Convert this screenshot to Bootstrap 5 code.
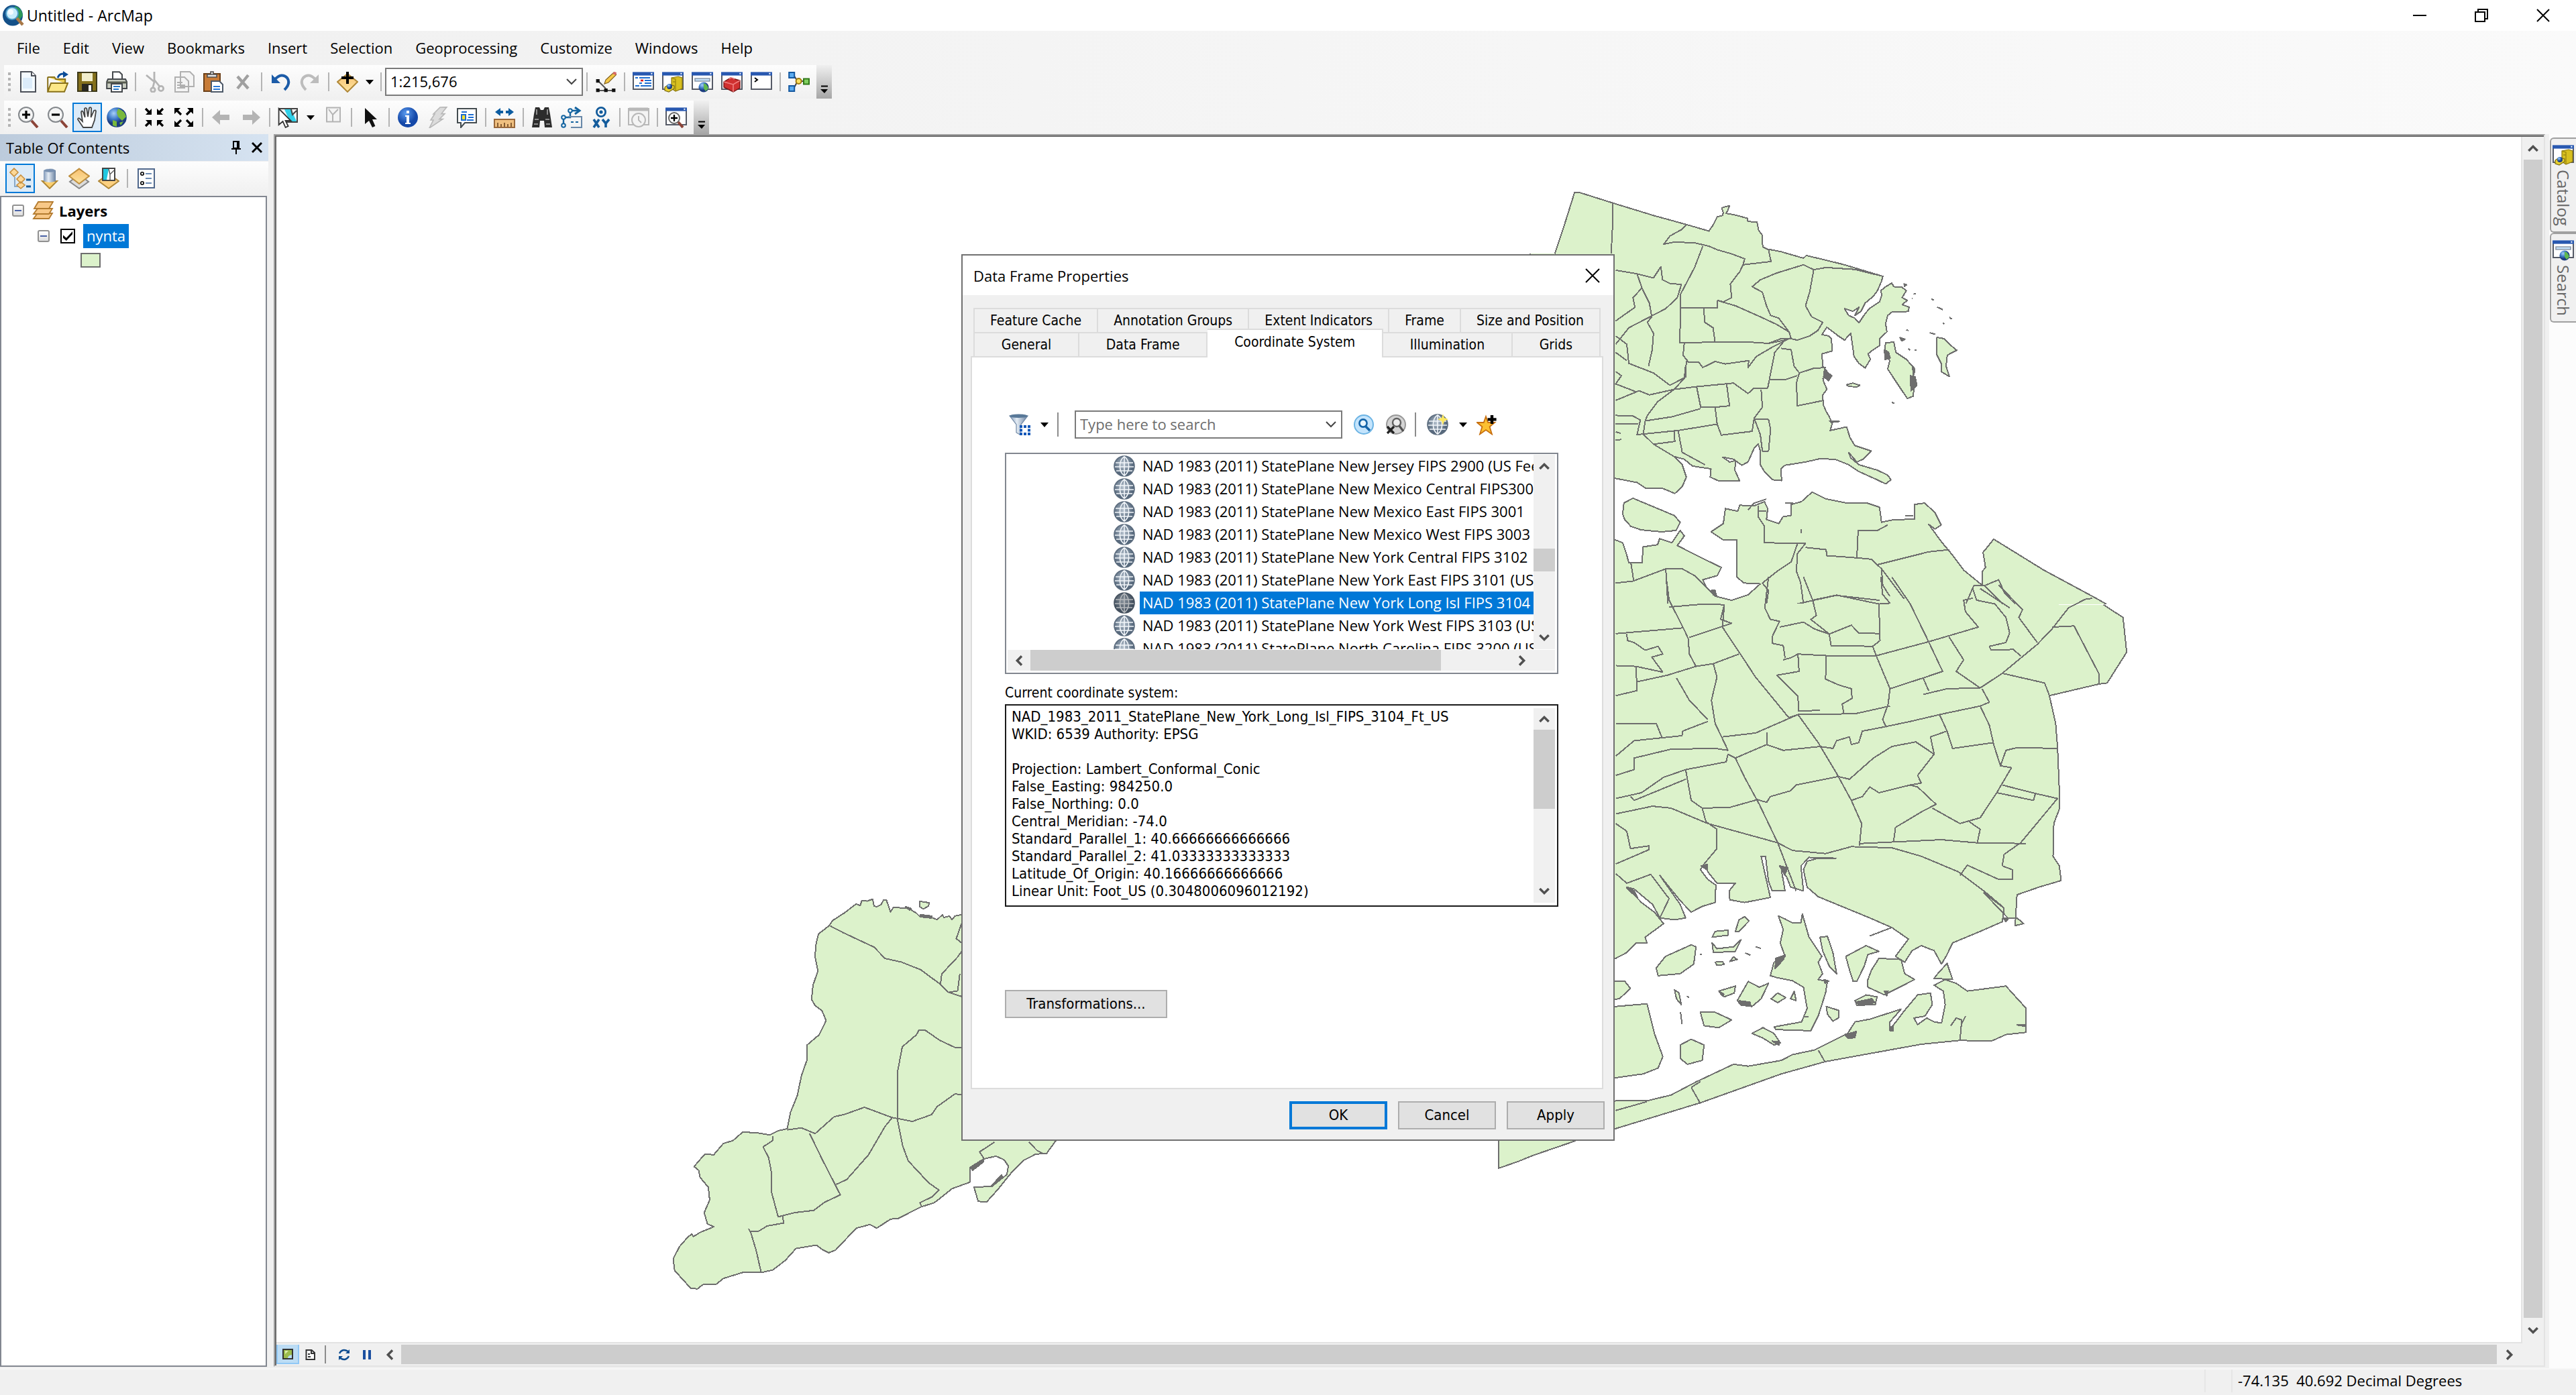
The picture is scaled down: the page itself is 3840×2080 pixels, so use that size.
<!DOCTYPE html>
<html lang="en">
<head>
<meta charset="utf-8">
<meta name="viewport" content="width=device-width, initial-scale=1">
<title>Untitled - ArcMap</title>
<link href="https://cdn.jsdelivr.net/npm/bootstrap@5.3.0/dist/css/bootstrap.min.css" rel="stylesheet">
<script src="https://cdn.jsdelivr.net/npm/bootstrap@5.3.0/dist/js/bootstrap.bundle.min.js"></script>
<style>
  :root { --face:#f0f0f0; --accent:#0078d7; --thumb:#cdcdcd; --ui:"Open Sans","Noto Sans",sans-serif; --dlg:"DejaVu Sans Condensed","DejaVu Sans",sans-serif; }
  body { font-family:var(--ui); font-size:22px; line-height:28px; color:#000; background:var(--face); overflow:hidden; }
  button { color:inherit; font:inherit; padding:0; border:0; background:none; }
  svg { display:block; flex:none; }
  .ico { width:32px; height:32px; }
  .titlebar { height:46px; background:#fff; font-size:23px; padding-right:3px; }
  .winbtn { width:92px; height:46px; display:flex; align-items:center; justify-content:center; }
  .chrome-area { background:linear-gradient(to right,#f0f0f0,#fafafa); }
  .menus { height:51px; padding-left:8px; }
  .menus .nav-link { color:#000; padding:0 17px 2px; }
  .strip { height:50px; background:linear-gradient(#fdfdfd,#f0f0f0); width:max-content; margin-left:6px; }
  .grip { width:14px; height:28px; background:repeating-linear-gradient(#b4b4b4 0 4px,transparent 4px 8px) 6px 0/4px 28px no-repeat; }
  .tool { width:44px; height:44px; display:flex; align-items:center; justify-content:center; flex:none; }
  .tool.picked { background:#dcebf8; border:2px solid var(--accent); }
  .drop { width:22px; height:44px; display:flex; align-items:center; justify-content:center; flex:none; }
  .drop::after { content:""; border:6px solid transparent; border-top:7px solid #000; border-bottom:0; }
  .split { width:12px; height:28px; flex:none; background:linear-gradient(#b4b4b4,#b4b4b4) 5px 0/2px 100% no-repeat; }
  .more { width:23px; height:50px; margin-left:4px; background:linear-gradient(#f0f0f0,#a6a6a6); display:flex; align-items:flex-end; justify-content:center; padding-bottom:4px; }
  .combo { position:relative; height:42px; }
  .combo input { width:100%; height:100%; border:2px solid #7a7a7a; border-radius:0; padding:0 40px 2px 6px; font:inherit; background:#fff; color:#000; }
  .combo input::placeholder { color:#6d6d6d; opacity:1; }
  .combo button { position:absolute; right:8px; top:12px; }
  .side { width:400px; }
  .side-head { height:40px; background:linear-gradient(to right,#bccbdc,#d6e3f1); padding:0 9px; }
  .side-tools { height:50px; background:linear-gradient(#fdfdfd,#f0f0f0); padding-left:8px; margin:1px 0; }
  .tree { border:2px solid #828790; background:#fff; margin:0 2px 2px 0; }
  .tree-row { height:36px; }
  .twist { width:18px; height:18px; border:2px solid #919191; border-radius:3px; background:linear-gradient(#fff,#dcdcdc); position:relative; }
  .twist::after { content:""; position:absolute; left:2px; right:2px; top:6px; height:2px; background:#4b63a7; }
  .tick { appearance:none; width:22px; height:22px; border:2px solid #000; margin:0; background:#fff; display:grid; place-items:center; }
  .tick:checked::after { content:""; width:14px; height:14px; background:#000; clip-path:polygon(0 40%,35% 70%,100% 0,100% 30%,35% 100%,0 70%); }
  .picked-text { background:var(--accent); color:#fff; height:36px; line-height:34px; padding:0 5px; }
  .swatch { width:30px; height:22px; border:2px solid #6e6e6e; background:#dcf2cb; }
  .frame { border:2px solid #a0a0a0; border-right-color:#e3e3e3; border-bottom-color:#e3e3e3; box-shadow:inset 2px 2px #696969; padding:2px; margin:0 6px 2px 8px; }
  .map { background:#fff; border-right:2px solid #e3e3e3; border-bottom:2px solid #e3e3e3; min-width:0; min-height:0; overflow:hidden; }
  .map svg { width:100%; height:100%; shape-rendering:crispEdges; }
  .map path { stroke:#6e6e6e; stroke-width:2px; vector-effect:non-scaling-stroke; stroke-linejoin:round; }
  .land { fill:#dcf2cb; } .seam { fill:none; } .speck { fill:#6e6e6e; }
  .bar-v { width:28px; background:var(--face); }
  .bar-h { background:var(--face); }
  .bar-v button, .bar-h button { display:flex; align-items:center; justify-content:center; flex:none; }
  .knob { background:var(--thumb); }
  .view-btn { width:34px; height:29px; display:flex; align-items:center; justify-content:center; }
  .view-btn.picked { background:#bcdcf4; border:2px solid #90c8f6; border-top:0; }
  .dock { width:40px; background:#fcfcfc; padding-top:5px; }
  .dock button { border:2px solid #a0a0a0; border-right:0; border-radius:6px 0 0 6px; background:var(--face); color:#666; font-size:24px; padding:8px 4px 8px 2px; display:flex; flex-direction:column; align-items:center; gap:6px; width:39px; margin-left:1px; }
  .dock span { writing-mode:vertical-rl; line-height:30px; }
  .status { height:40px; border-top:2px solid #f7f7f7; }
  .status div { border-left:2px solid #e6e6e6; height:34px; padding:2px 8px 0 8px; }
  .dlg { position:absolute; left:1433px; top:379px; width:974px; border:2px solid #707070; background:var(--face); font-family:var(--dlg); font-size:21px; }
  .dlg-title { height:59px; background:#fff; padding:0 16px; font-family:var(--ui); font-size:22px; }
  .tabs { margin:0 19px 0 16px; }
  .tabs .nav-link { height:36px; border:2px solid #dcdcdc; border-bottom:0; border-left-width:0; border-radius:0; padding:2px 4px; color:#000; background:var(--face); line-height:28px; white-space:nowrap; }
  .tabs .nav-item:first-child .nav-link { border-left-width:2px; }
  .tabs .nav-link.active { background:#fff; margin-top:-5px; height:43px; margin-bottom:-2px; padding-bottom:7px; position:relative; z-index:1; }
  .sheet { background:#fff; border:2px solid #dcdcdc; margin:0 15px 0 12px; padding:79px 65px 104px 49px; }
  .lookup { font-family:var(--ui); height:42px; font-size:22px; }
  .wide { width:48px; }
  .rule { width:10px; height:36px; background:linear-gradient(#8c8c8c,#8c8c8c) 4px 0/2px 100% no-repeat; }
  .picker { margin-top:21px; border:2px solid #828790; height:330px; font-family:var(--ui); font-size:22px; padding:1px 3px 3px 2px; }
  .picker ul { padding-left:158px; overflow:hidden; min-width:0; height:290px; }
  .picker li { height:34px; display:flex; align-items:center; white-space:nowrap; flex:none; gap:7px; }
  .picker li span { flex:1 0 auto; height:34px; line-height:32px; padding-left:4px; }
  .picker li.on span { background:var(--accent); color:#fff; }
  .bar-wide { width:32px; }
  .coords { border:2px solid #1a1a1a; height:302px; margin-top:3px; padding:4px 3px 4px 0; }
  .coords textarea { border:0; resize:none; overflow:hidden; padding:0 8px; font:inherit; font-size:22px; line-height:26px; outline:0; color:#000; min-width:0; }
  .push { height:42px; border:2px solid #adadad; background:#e1e1e1; width:146px; font-size:22px; }
  .push.main { border:4px solid var(--accent); }
</style>
</head>
<body class="d-flex flex-column vh-100 position-relative">

<svg width="0" height="0" class="position-absolute" aria-hidden="true">
  <defs>
    <radialGradient id="gBlue" cx=".35" cy=".3"><stop offset="0" stop-color="#a8d0f8"/><stop offset=".6" stop-color="#3c78c8"/><stop offset="1" stop-color="#1c3c80"/></radialGradient>
    <radialGradient id="gInfo" cx=".4" cy=".3"><stop offset="0" stop-color="#5c9cf0"/><stop offset="1" stop-color="#1448a8"/></radialGradient>
    <radialGradient id="gSteel" cx=".45" cy=".4"><stop offset="0" stop-color="#b8c4d0"/><stop offset="1" stop-color="#56687c"/></radialGradient>
    <linearGradient id="gGold" x2="0" y2="1"><stop offset="0" stop-color="#f8c070"/><stop offset="1" stop-color="#fce4a0"/></linearGradient>
    <linearGradient id="gCan"><stop offset="0" stop-color="#8098b8"/><stop offset=".4" stop-color="#e4ecf4"/><stop offset="1" stop-color="#6880a0"/></linearGradient>
  </defs>
  <symbol id="win" viewBox="0 0 16 16"><path d="M.5 1.500h15v12H.5z" fill="#fff" stroke="#555a66"/><path d="M0 .7h16v2.600H0z" fill="#2858b0"/><path d="M13.700 1.400h1v1h-1z" fill="#fff"/></symbol>
  <symbol id="catalog" viewBox="0 0 16 16"><use href="#win"/><path d="M7 5l5-1 3 1v8l-5 2-3-2z" fill="#d8c020" stroke="#8c7810" stroke-width=".6"/><path d="M7 5l3 1v9M8 8h2" fill="none" stroke="#a08c10" stroke-width=".7"/><path d="M2 12l3-2 4 1v2l-4 2.500-3-1z" fill="#e8d030" stroke="#7c6c10" stroke-width=".6"/><circle cx="5.500" cy="11.500" r="2" fill="url(#gBlue)"/></symbol>
  <symbol id="searchwin" viewBox="0 0 16 16"><use href="#win"/><path d="M2.500 5.500h11v2h-11z" fill="#c4e0f8" stroke="#8c98a8" stroke-width=".8"/><circle cx="9" cy="12" r="3.800" fill="url(#gBlue)"/><path d="M9 9q3 1 3.500 4l-2 2-1.500-2z" fill="#60b850"/></symbol>
  <symbol id="gridglobe" viewBox="0 0 16 16"><circle cx="8" cy="8" r="7.500" fill="url(#gSteel)" stroke="#5c6c7e" stroke-width=".8"/><path d="M1.500 5.500h13M1 8.500h14M2 11.500h12M8 .8v14.400M8 .8C3.600 4 3.600 12 8 15.200M8 .8c4.400 3.200 4.400 11.200 0 14.400" fill="none" stroke="#f2f6fa" stroke-width=".8"/></symbol>
  <symbol id="plusArrow" viewBox="0 0 12 8"><path d="M1 7l5-5 5 5" fill="none" stroke="#505050" stroke-width="2.600"/></symbol>
</svg>

<header>
  <div class="titlebar d-flex align-items-center">
    <svg class="ico ms-1 me-1" viewBox="0 0 16 16"><ellipse cx="7.500" cy="8" rx="7.500" ry="7.800" fill="#145088"/><path d="M9 1q5 1 6 7l-3 4-4-4z" fill="#2c9858"/><circle cx="7" cy="6.500" r="4.500" fill="#c8ecfc" stroke="#4c9cc8"/><circle cx="6" cy="5.500" r="2" fill="#fff" opacity=".8"/><path d="M10.500 10l4.500 5" stroke="#a87848" stroke-width="2.200"/></svg>
    <span>Untitled - ArcMap</span>
    <div class="d-flex ms-auto">
      <button class="winbtn" aria-label="Minimize"><svg width="20" height="20"><path d="M0 10h20" stroke="#000" stroke-width="2"/></svg></button>
      <button class="winbtn" aria-label="Restore"><svg width="20" height="20" fill="none" stroke="#000" stroke-width="2"><path d="M1 5h14v14H1zM5 5V1h14v14h-4"/></svg></button>
      <button class="winbtn" aria-label="Close"><svg width="20" height="20"><path d="M1 1l18 18M19 1L1 19" stroke="#000" stroke-width="2"/></svg></button>
    </div>
  </div>
  <div class="chrome-area">
    <nav class="nav menus align-items-center">
      <a class="nav-link" href="#">File</a><a class="nav-link" href="#">Edit</a><a class="nav-link" href="#">View</a><a class="nav-link" href="#">Bookmarks</a><a class="nav-link" href="#">Insert</a><a class="nav-link" href="#">Selection</a><a class="nav-link" href="#">Geoprocessing</a><a class="nav-link" href="#">Customize</a><a class="nav-link" href="#">Windows</a><a class="nav-link" href="#">Help</a>
    </nav>
    <div class="strip d-flex align-items-center" role="toolbar" aria-label="Standard">
      <div class="grip"></div>
      <button class="tool" aria-label="New"><svg class="ico" viewBox="0 0 16 16"><path d="M2.500.5h8l3 3v12h-11z" fill="#f4faff" stroke="#4c5058"/><path d="M10.500.5v3h3" fill="#fff" stroke="#4c5058"/><path d="M4 5h7v8H4z" fill="#dcecfa"/></svg></button>
      <button class="tool" aria-label="Open"><svg class="ico" viewBox="0 0 16 16"><path d="M.6 4.500h5l1 1.500h7v3" fill="#e8cc50" stroke="#887018"/><path d="M.6 15.400v-11M.6 15.400L3 9h12.500l-2.500 6.400z" fill="#fce888" stroke="#887018"/><path d="M8 5q1-3 4-3h1" fill="none" stroke="#0c4c98" stroke-width="1.500"/><path d="M12 0l4 2.500-4 2.500z" fill="#0c4c98"/></svg></button>
      <button class="tool" aria-label="Save"><svg class="ico" viewBox="0 0 16 16"><path d="M1 1h14v14H1z" fill="#84701c" stroke="#3c3818"/><path d="M4 1.500h8v6H4z" fill="#f2eecc"/><path d="M4 9.500h8V15H4z" fill="#282820"/><path d="M9 10.500h2V15H9z" fill="#fff"/></svg></button>
      <button class="tool" aria-label="Print"><svg class="ico" viewBox="0 0 16 16"><path d="M5 6V.6h5l2 2V6" fill="#fff" stroke="#44484c"/><path d="M1.500 6h13l1 2v5H.6V8z" fill="#c8ccc0" stroke="#44484c"/><path d="M.6 8.500h15" stroke="#585c50" stroke-width="1.500"/><path d="M4 9.500h8v6H4z" fill="#fff" stroke="#44484c"/><path d="M5.500 11.500h5M5.500 13.500h4" stroke="#2878c8"/></svg></button>
      <div class="split"></div>
      <button class="tool" aria-label="Cut"><svg class="ico" viewBox="0 0 16 16" fill="none" stroke="#b4b4b4" stroke-width="1.400"><path d="M8 .5v6l4 5M2 3l6 5-1 4"/><circle cx="13" cy="13" r="1.800"/><circle cx="7" cy="14" r="1.600"/></svg></button>
      <button class="tool" aria-label="Copy"><svg class="ico" viewBox="0 0 16 16" fill="#f4f4f4" stroke="#b0b0b0"><path d="M5.500.5h7l3 3v8h-10zM1.500 4.500h7l3 3v8h-10z"/><path d="M3 8.500h4M3 10.500h6M3 12.500h6"/></svg></button>
      <button class="tool" aria-label="Paste"><svg class="ico" viewBox="0 0 16 16"><path d="M1 2h12v13H1z" fill="#c87c38" stroke="#6c4018"/><path d="M3.500 2.500h7v2h-7zM6 .5h2v2H6z" fill="#e8e8e8" stroke="#505050" stroke-width=".8"/><path d="M6.500 7.500h6l2.500 2.500v5.500h-8.500z" fill="#fff" stroke="#4c5868"/><path d="M8 11.500h5M8 13.500h5" stroke="#2878d8"/></svg></button>
      <button class="tool" aria-label="Delete"><svg class="ico" viewBox="0 0 16 16"><path d="M4 4l8 9M12 3L4 13" stroke="#a0a0a0" stroke-width="2.200"/></svg></button>
      <div class="split"></div>
      <button class="tool" aria-label="Undo"><svg class="ico" viewBox="0 0 16 16"><path d="M4 6q5-5 9-1 3 4-2 9" fill="none" stroke="#1c5ca8" stroke-width="2"/><path d="M1.500 2.500v6.500h6.500z" fill="#1c5ca8"/></svg></button>
      <button class="tool" aria-label="Redo"><svg class="ico" viewBox="0 0 16 16"><path d="M12 6q-5-5-9-1-3 4 2 9" fill="none" stroke="#bcbcbc" stroke-width="2"/><path d="M14.500 2.500v6.500H8z" fill="#bcbcbc"/></svg></button>
      <div class="split"></div>
      <button class="tool" aria-label="Add Data"><svg class="ico" viewBox="0 0 16 16"><path d="M8 2l7.500 6L8 15.500.5 8z" fill="url(#gGold)" stroke="#b08838"/><path d="M8 .5v9M3.500 5h9" stroke="#000" stroke-width="2"/></svg></button>
      <button class="drop" aria-label="Add Data options"></button>
      <div class="split"></div>
      <div class="combo" style="width:295px"><input type="text" aria-label="Map scale" value="1:215,676"><button aria-label="Show scales"><svg width="18" height="18" viewBox="0 0 18 18"><path d="M2 5l7 7 7-7" fill="none" stroke="#444" stroke-width="2"/></svg></button></div>
      <div class="split"></div>
      <button class="tool" aria-label="Editor"><svg class="ico" viewBox="0 0 16 16"><path d="M2 7l6 6M2 14.500h12" stroke="#555" fill="none"/><path d="M.8 6h2.600v2.600H.8zM.8 13h2.600v2.600H.8zM6.800 13h2.600v2.600H6.800zM12.600 13h2.600v2.600h-2.600z" fill="#111"/><path d="M7 9.500l1-3 6-5.500 2 1.500-6 6z" fill="#f4c848" stroke="#806020" stroke-width=".6"/><path d="M13 2l1.300-1.500L16 1l-.5 2z" fill="#d86868"/></svg></button>
      <div class="split"></div>
      <button class="tool" aria-label="Table Of Contents window"><svg class="ico" viewBox="0 0 16 16"><use href="#win"/><path d="M2 5h2M5 5h8M5 9h2M2 11h3M6 11h8M9 9h5" stroke="#1c6cd0"/><path d="M6 7h2" stroke="#e02020" stroke-width="1.400"/><path d="M9 7h5" stroke="#1c6cd0"/></svg></button>
      <button class="tool" aria-label="Catalog window"><svg class="ico"><use href="#catalog"/></svg></button>
      <button class="tool" aria-label="Search window"><svg class="ico"><use href="#searchwin"/></svg></button>
      <button class="tool" aria-label="ArcToolbox window"><svg class="ico" viewBox="0 0 16 16"><use href="#win"/><path d="M2 8l5-3 7 2v5.500L9 15.500l-7-3.500z" fill="#d03030" stroke="#781818" stroke-width=".7"/><path d="M2 8l7 2 5-3M9 10v5.500M6 6q1-2 4 0" fill="none" stroke="#f08080" stroke-width=".8"/></svg></button>
      <button class="tool" aria-label="Python window"><svg class="ico" viewBox="0 0 16 16"><use href="#win"/><path d="M3 5l2 1.500L3 8" fill="none" stroke="#000"/></svg></button>
      <div class="split"></div>
      <button class="tool" aria-label="ModelBuilder"><svg class="ico" viewBox="0 0 16 16"><path d="M4 3l3 4.500L4 13M7 7.500h6" fill="none" stroke="#444"/><path d="M.6 1h4v4h-4zM.6 11h4v4h-4z" fill="#5cacf0" stroke="#1458a0"/><circle cx="7.800" cy="7.500" r="2" fill="#fce060" stroke="#a07c10"/><path d="M11.500 5.700h4v4h-4z" fill="#80d060" stroke="#307818"/></svg></button>
      <button class="more" aria-label="Toolbar options"><svg width="16" height="16" viewBox="0 0 16 16"><path d="M3 1.500h10" stroke="#000" stroke-width="2"/><path d="M2 6h11l-5 6z"/></svg></button>
    </div>
    <div style="height:3px"></div>
    <div class="strip d-flex align-items-center" role="toolbar" aria-label="Tools">
      <div class="grip"></div>
      <button class="tool" aria-label="Zoom In"><svg class="ico" viewBox="0 0 16 16"><circle cx="6.500" cy="6" r="5.500" fill="#f4f4f4" stroke="#84888c"/><path d="M10.500 10.500l4.500 5" stroke="#8c4438" stroke-width="2"/><path d="M6.500 3v6M3.500 6h6" stroke="#000" stroke-width="1.600"/></svg></button>
      <button class="tool" aria-label="Zoom Out"><svg class="ico" viewBox="0 0 16 16"><circle cx="6.500" cy="6" r="5.500" fill="#f4f4f4" stroke="#84888c"/><path d="M10.500 10.500l4.500 5" stroke="#8c4438" stroke-width="2"/><path d="M3.500 6h6" stroke="#000" stroke-width="1.600"/></svg></button>
      <button class="tool picked" aria-label="Pan"><svg class="ico" viewBox="0 0 16 16"><path d="M5 15.500L1 9.500q0-1.500 1.500-.5L4.500 11 3.500 4q.5-1.500 1.500 0L6.300 8 6 1.500q.8-1.200 1.600 0L8.500 7.500 9.500 1q1-1 1.600.2L10.800 8l2.200-5q1.300-.8 1.500.5L13.500 10l-2 5.500z" fill="#fff" stroke="#444" stroke-width=".9"/></svg></button>
      <button class="tool" aria-label="Full Extent"><svg class="ico" viewBox="0 0 16 16"><circle cx="8" cy="8" r="7.400" fill="url(#gBlue)"/><path d="M9 1.500q5 1.500 6 6l-3 3-3-3-1-3zM5 10l3 1v4l-3-1zM10 12l3-1-2 3z" fill="#78b83c"/></svg></button>
      <div class="split"></div>
      <button class="tool" aria-label="Fixed Zoom In"><svg class="ico" viewBox="0 0 16 16"><path d="M1.500 1.500l3 3M14.500 1.500l-3 3M1.500 14.500l3-3M14.500 14.500l-3-3" stroke="#000" stroke-width="1.600"/><path d="M6 1.500V6H1.500zM10 1.500V6h4.500zM6 14.500V10H1.500zM10 14.500V10h4.500z"/></svg></button>
      <button class="tool" aria-label="Fixed Zoom Out"><svg class="ico" viewBox="0 0 16 16"><path d="M2 2l4 4M14 2l-4 4M2 14l4-4M14 14l-4-4" stroke="#000" stroke-width="1.600"/><path d="M1 1h4.500L1 5.500zM15 1h-4.500L15 5.500zM1 15h4.500L1 10.500zM15 15h-4.500l4.500-4.500z"/></svg></button>
      <div class="split"></div>
      <button class="tool" aria-label="Previous Extent"><svg class="ico" viewBox="0 0 16 16"><path d="M1 8l6-5.500V6h7v4H7v3.500z" fill="#b4b4b4"/></svg></button>
      <button class="tool" aria-label="Next Extent"><svg class="ico" viewBox="0 0 16 16"><path d="M15 8L9 2.500V6H2v4h7v3.500z" fill="#b4b4b4"/></svg></button>
      <div class="split"></div>
      <button class="tool" aria-label="Select Features"><svg class="ico" viewBox="0 0 16 16"><path d="M1.500 1.500h13v10h-13z" fill="#f4f4f4" stroke="#444"/><path d="M5 2h5l4 9h-5z" fill="#30d0e8"/><path d="M10 2l1 4 3-3" fill="none" stroke="#444"/><path d="M.8 1.500v12l3-2.500 2 4.500 2-1-2-4h4z" fill="#fff" stroke="#333" stroke-width=".9"/></svg></button>
      <button class="drop" aria-label="Selection options"></button>
      <button class="tool" aria-label="Clear Selection"><svg class="ico" viewBox="0 0 16 16" fill="#f4f4f4" stroke="#b4b4b4"><path d="M3.500.8h10v10.500h-10z"/><path d="M5 2l3 4v5M8 6l4-4"/></svg></button>
      <div class="split"></div>
      <button class="tool" aria-label="Select Elements"><svg class="ico" viewBox="0 0 16 16"><path d="M4 1v12l3-2.500 2.500 5 2.200-1L9.500 9.500H13z" fill="#111"/></svg></button>
      <div class="split"></div>
      <button class="tool" aria-label="Identify"><svg class="ico" viewBox="0 0 16 16"><circle cx="8" cy="8" r="7.500" fill="url(#gInfo)"/><path d="M7 3h2v2H7zM6 6.500h3V12h1v1H6v-1h1V7.500H6z" fill="#fff"/></svg></button>
      <button class="tool" aria-label="Hyperlink"><svg class="ico" viewBox="0 0 16 16"><path d="M10 .5l5-.2-4 5h2.500l-4 4H12L2 16l3-6H3l3-4.500H5z" fill="#dcdcdc" stroke="#b8b8b8" stroke-width=".8"/></svg></button>
      <button class="tool" aria-label="HTML Popup"><svg class="ico" viewBox="0 0 16 16"><path d="M1 1.500h14v10.500H6.500L3.500 15.500V12H1z" fill="#fff" stroke="#444c50"/><path d="M4 4h4M9 6h4M9 8h4M8 10h5" stroke="#1c6cd0"/><path d="M4 6h3v4H4z" fill="#fce030" stroke="#1c6cd0"/></svg></button>
      <div class="split"></div>
      <button class="tool" aria-label="Measure"><svg class="ico" viewBox="0 0 16 16"><path d="M.5 9.500h15v6H.5z" fill="#f0c080" stroke="#98683c"/><path d="M3 15v-3M5.500 15v-2M8 15v-3M10.500 15v-2M13 15v-3" stroke="#6c4420" stroke-width=".8"/><path d="M1 4l4-3v2h6V1l4 3-4 3V5H5v2z" fill="#0c5ca0"/><path d="M7 2h2v4H7z" fill="#f6f6f6"/></svg></button>
      <div class="split"></div>
      <button class="tool" aria-label="Find"><svg class="ico" viewBox="0 0 16 16"><path d="M3 .5h3l1 2h2l1-2h3l1 5 1.500 10H10l-.5-5h-3l-.5 5H.5L2 5.500z" fill="#2c2c2c"/><path d="M2.500 9.500h3M10.500 9.500h3M2 13h3M11 13h3M4 2v4M12 2v4" stroke="#8c8c8c"/></svg></button>
      <button class="tool" aria-label="Find Route"><svg class="ico" viewBox="0 0 16 16" fill="none" stroke="#1464a0"><path d="M2 13V8h5V3h6" stroke-width="1.200"/><path d="M10.500.5L14 3l-3.500 2.500" stroke-width="1.500"/><path d="M5.500 7.500h10v8h-8" stroke="#6888a8"/><circle cx="2" cy="14" r="1.400" fill="#fff"/><circle cx="2" cy="8" r="1.400" fill="#fff"/><circle cx="7" cy="3" r="1.400" fill="#fff"/><path d="M7.500 11.500h2M11 11.500h2"/></svg></button>
      <button class="tool" aria-label="Go To XY"><svg class="ico" viewBox="0 0 16 16" fill="none" stroke="#145c9c"><circle cx="8" cy="4" r="3.300" stroke-width="1.400"/><circle cx="8" cy="4" r=".8" fill="#145c9c"/><path d="M2.500 9.500l4 6M6.500 9.500l-4 6M9 9.500l2.500 3v3M14 9.500l-2.500 3" stroke-width="1.800"/></svg></button>
      <div class="split"></div>
      <button class="tool" aria-label="Time Slider"><svg class="ico" viewBox="0 0 16 16" fill="#f4f4f4" stroke="#b8b8b8"><path d="M.5 1.500h15v12H.5z"/><path d="M1 2h14" stroke-width="2.500"/><circle cx="8" cy="10" r="5"/><path d="M8 7v3l2 2" fill="none"/></svg></button>
      <div class="split"></div>
      <button class="tool" aria-label="Viewer Window"><svg class="ico" viewBox="0 0 16 16"><use href="#win"/><circle cx="6.500" cy="8.500" r="4" fill="#fff" stroke="#666"/><path d="M6.500 6v5M4 8.500h5" stroke="#000" stroke-width="1.200"/><path d="M9.500 11.500l3.500 4" stroke="#8c4438" stroke-width="2"/></svg></button>
      <button class="more" aria-label="Toolbar options"><svg width="16" height="16" viewBox="0 0 16 16"><path d="M3 1.500h10" stroke="#000" stroke-width="2"/><path d="M2 6h11l-5 6z"/></svg></button>
    </div>
  </div>
</header>

<main class="d-flex flex-grow-1" style="min-height:0">
  <aside class="side d-flex flex-column flex-shrink-0">
    <div class="side-head d-flex align-items-center">
      <span class="me-auto">Table Of Contents</span>
      <button class="me-3" aria-label="Auto hide"><svg width="14" height="20" viewBox="0 0 14 20"><path d="M3 1h8v10H3zM9 1v10M0 12h14M7 12v8" fill="none" stroke="#000" stroke-width="2"/></svg></button>
      <button aria-label="Close panel"><svg width="16" height="16" viewBox="0 0 16 16"><path d="M1 1l14 14M15 1L1 15" stroke="#000" stroke-width="3"/></svg></button>
    </div>
    <div class="side-tools d-flex align-items-center">
      <button class="tool picked" aria-label="List By Drawing Order"><svg class="ico" viewBox="0 0 16 16"><path d="M4 7v7h4" fill="none" stroke="#88a8c8"/><path d="M3.500.5l3 3-3 3-3-3zM8.500 5.500l3 3-3 3-3-3zM8.500 10.500l3 2.500-3 2.500-3-2.500z" fill="#fcd898" stroke="#c89040" stroke-width=".8"/><path d="M12.500 9H16M12.500 14H16" stroke="#145c9c" stroke-width="1.400"/></svg></button>
      <button class="tool" aria-label="List By Source"><svg class="ico" viewBox="0 0 16 16"><path d="M2.500 10h11L8 15.500z" fill="#fcd070" stroke="#b08838"/><path d="M3.500 2q4.500-3 9 0v8q-4.500 2-9 0z" fill="url(#gCan)"/><ellipse cx="8" cy="2.200" rx="4" ry="1.200" fill="#7890b0"/></svg></button>
      <button class="tool" aria-label="List By Visibility"><svg class="ico" viewBox="0 0 16 16"><path d="M8 5l7 5.500L8 15.500 1 10.500z" fill="#dcdcdc" stroke="#888"/><path d="M8 .8l7.500 5.500L8 12 .5 6.300z" fill="url(#gGold)" stroke="#c09040"/></svg></button>
      <button class="tool" aria-label="List By Selection"><svg class="ico" viewBox="0 0 16 16"><path d="M.5 10L4 7.500h8l3.500 2.500L8 15.500z" fill="#fcd080" stroke="#b08838"/><path d="M3.500.5h9v9h-9z" fill="#fff" stroke="#444"/><path d="M4 1h4L6.500 9H4z" fill="#20c8e0"/><path d="M8 1l1 4 3-3M9 5v4" fill="none" stroke="#555" stroke-width=".7"/></svg></button>
      <div class="split"></div>
      <button class="tool" aria-label="Options"><svg class="ico" viewBox="0 0 16 16"><path d="M2 1h12v14H2z" fill="#fff" stroke="#50688c"/><circle cx="5" cy="4.500" r="1.100" fill="none" stroke="#000" stroke-width=".8"/><circle cx="5" cy="11.500" r="1.100" fill="none" stroke="#000" stroke-width=".8"/><path d="M7.500 4.500H12M7.500 8H12M7.500 11.500H12" stroke="#6c8cb4"/></svg></button>
    </div>
    <div class="tree flex-grow-1 pt-1">
      <div class="tree-row d-flex align-items-center" style="padding:0 0 4px 16px">
        <span class="twist me-2"></span>
        <svg class="ico mx-1" viewBox="0 0 16 16"><g fill="#f8c888" stroke="#b47c30" stroke-width=".9"><path d="M1 14l3-4h11l-2.500 4z"/><path d="M1 10.500l3-4h11l-2.500 4z"/><path d="M1.500 6.500l3-5h11l-3 5z"/></g></svg>
        <strong class="ms-1">Layers</strong>
      </div>
      <div class="tree-row d-flex align-items-center" style="padding-left:54px">
        <span class="twist"></span>
        <input class="tick" type="checkbox" id="nynta" checked style="margin:0 12px 0 16px">
        <label class="picked-text" for="nynta">nynta</label>
      </div>
      <div class="tree-row d-flex align-items-center" style="padding-left:118px"><span class="swatch"></span></div>
    </div>
  </aside>

  <section class="frame flex-grow-1 d-flex flex-column" style="min-width:0">
    <div class="d-flex flex-grow-1" style="min-height:0">
      <div class="map flex-grow-1">
        <svg viewBox="412 204 3346 1796" preserveAspectRatio="xMinYMin slice" role="img" aria-label="Neighborhood map of New York City">
          <!-- Staten Island -->
          <g transform="translate(980 1300) scale(.40816 .42092)">
            <path class="land" d="M1500 150L1110 150 1085 155 1075 168 1065 155 1045 160 1040 150 1020 168 1000 160 955 155 945 145 920 130 900 126 860 125 850 140 835 98 825 98 815 115 800 122 790 120 785 95 765 102 745 100 740 118 725 112 680 145 640 170 625 190 605 205 587 218 577 260 575 300 585 350 567 400 562 450 575 472 600 490 615 525 590 575 545 612 545 665 525 720 510 790 485 850 473 908 440 915 410 930 360 922 310 920 275 950 240 960 205 1000 172 998 133 1042 150 1055 155 1080 185 1115 190 1160 170 1205 182 1245 205 1255 155 1275 130 1290 125 1280 110 1292 80 1325 57 1368 62 1410 95 1445 120 1472 145 1475 165 1460 212 1460 240 1438 310 1417 378 1417 420 1408 465 1375 505 1332 580 1320 600 1335 625 1347 650 1337 725 1260 775 1247 800 1260 850 1228 880 1225 960 1185 1010 1170 1075 1120 1140 1097 1140 1045 1190 1015 1235 1005 1265 1018 1280 1040 1275 1070 1220 1112 1155 1115 1170 1165 1200 1168 1240 1125 1290 1065 1335 1020 1380 998 1420 995 1450 955 1500 900"/>
            <path class="land" d="M957 103L992 108 988 120 970 130 957 122Z"/>
            <path class="seam" d="M630 190L680 215 790 265 830 305 890 318 960 345 1030 395 1062 425 1110 440M1110 280L1095 300 1037 360 1032 400M1110 180L1090 235 1110 250M1103 360L1095 420 1062 425M1110 620L1085 620 1030 595 975 558 953 560 945 575 893 618 877 700 875 875 895 970 915 1022 990 1100 1027 1125 1000 1150 957 1170 965 1185M473 912L525 905 575 925 645 865 680 858 755 832 855 868 930 882 1000 858 1020 830 1085 785 1110 787M855 870L830 900 770 1000 690 1088 652 1105M555 925L600 1015 667 1142 610 1168 570 1197 500 1205 440 1220 415 1130 415 1060 405 1010 385 972 420 950 420 935M457 1220L460 1242 400 1252 370 1270 340 1272M332 1262L340 1275 360 1340 378 1417M1190 1012L1175 990 1230 955M1355 955L1385 985 1405 995"/>
            <path class="speck" d="M1145 1048L1190 1015 1190 1025 1150 1055ZM1218 1110L1255 1072 1260 1078 1222 1112ZM960 150L1000 155 1000 162 960 158ZM905 122L925 128 920 134Z"/>
          </g>
          <!-- Bronx and northern Queens -->
          <g transform="translate(2280 260) scale(.61224 .40816)">
            <path class="land" d="M60 290L80 200 108 66 120 66 200 104 300 150 380 183 435 207 445 185 455 155 468 150 470 140 466 122 485 114 480 135 476 142 498 148 528 160 530 172 552 174 556 205 564 220 566 265 575 272 610 282 665 306 672 296 760 328 858 372 855 390 845 425 835 445 815 470 805 500 790 515 800 485 785 500 765 490 775 515 790 525 800 542 812 515 825 490 850 465 856 440 853 425 865 410 880 397 885 410 905 412 915 425 905 450 918 460 905 475 922 485 920 500 900 503 880 503 870 515 865 545 868 575 850 600 850 625 835 640 822 655 828 675 815 707 800 690 788 665 785 630 780 580 765 605 750 590 722 558 710 585 727 590 733 600 735 645 710 655 712 700 730 735 712 745 715 760 722 785 712 805 713 840 720 865 728 885 735 910 730 935 770 922 778 960 790 990 830 1010 810 1040 795 1050 775 1015 780 1035 800 1060 845 1080 870 1098 878 1115 865 1130 840 1112 800 1085 775 1060 745 1042 708 1037 670 1050 620 1062 610 1075 612 1118 590 1115 570 1085 560 1060 560 1010 555 985 545 1000 530 1050 515 1062 495 1040 468 1032 485 1050 500 1045 498 1080 510 1120 460 1120 438 1105 440 1075 395 1065 375 1040 350 1030 370 1060 380 1105 370 1140 352 1165 320 1145 280 1145 260 1125 208 1110 0 1110 0 290"/>
            <path class="seam" d="M200 104L200 200 197 290M380 183L370 200 340 225 325 255 350 247 400 250 435 262 455 275 490 290 522 308 518 330 586 318 580 275 566 265M420 262L400 340 365 440 366 487 455 487 455 460M518 330L510 355 487 400 490 450 470 465 455 460M208 350L260 363 300 378 318 337 322 385 340 398 368 402 358 450 330 490 285 525 240 560 208 620M260 363L272 415 250 450 255 485 208 535M272 415L290 470 296 520 285 540 300 580 297 640 288 700M366 487L364 615 460 612 530 612 580 617 610 600 635 600M422 487L425 540 445 560 450 612M455 460L500 480 560 520 600 548 630 575 635 600M690 348L665 330 600 360 560 385 540 410 565 430 575 480 585 515 605 525 630 575M690 348L680 430 670 480 685 520 712 540 700 570 680 590 650 605 635 600M690 348L720 340 790 347 858 372M375 615L372 660 385 685 410 685 420 705 450 683 475 692 532 680 530 705 550 665 590 630 630 600M380 680L378 740 340 770 300 725 240 690 235 620 208 590M208 650L235 680M208 720L222 735 208 765 260 795M580 617L620 605 595 650 582 750 578 780 545 780 530 800 495 762 405 775 350 785 290 805 265 790 208 825M378 700L375 745 350 785M610 635L635 640 642 700 655 725 690 708 720 705M582 750L620 750 650 735M655 725L648 760 650 845 715 825M405 775L415 850 450 850 485 845 478 765M350 785L310 830 285 880 280 900 345 885 415 855M280 900L275 948 360 935 455 912 450 850M455 912L465 952 540 938 545 890M562 785L565 850 545 890 560 950 565 1010 580 1010 585 930 580 895 545 893M208 880L250 882 268 897 260 950 275 948M208 912L262 912M208 940L220 945M208 970L222 968M360 935L370 1015 425 1060M275 948L300 985 350 1030M300 985L352 975 350 935"/>
            <path class="land" d="M865 615L885 612 890 650 915 675 930 700 935 760 932 810 918 818 905 790 885 745 870 710 875 680 862 650ZM990 595L1008 600 1020 620 1038 642 1015 660 1012 700 1020 738 1000 720 1000 690 990 660ZM770 768L785 762 802 770 795 776 775 774ZM225 1240L228 1200 250 1182 270 1195 310 1220 350 1245 365 1270 355 1300 320 1305 270 1298 245 1285 230 1260Z"/>
            <path class="speck" d="M862 640l10 10 4 20-12 6zM925 735l12 5 4 30-14 20zM930 700l6 10-2 20zM716 715l18 20-8 18-12-14zM910 400l6 3-5 6zM933 435l5 2M928 453h3M976 455l6 4M990 484l14 10M1020 522l6 6M1004 542l4 4M915 567l6 3M972 578l14 6M900 596l12 6-8 6zM920 636l4 6M935 640l5 2M880 832l6 4M728 900l24 2-20 4z"/>
            <path class="land" d="M0 1569L0 1335 208 1335 225 1345 235 1390 240 1418 272 1418 275 1360 310 1352 315 1330 345 1345 365 1300 375 1320 358 1355 410 1395 465 1435 455 1465 420 1480 430 1510 450 1540 490 1555 530 1535 560 1495 520 1492 503 1470 503 1335 470 1335 440 1305 470 1275 475 1220 505 1230 510 1208 545 1210 570 1195 578 1220 575 1260 605 1275 615 1250 635 1245 635 1205 660 1195 686 1160 720 1185 770 1200 820 1200 850 1215 855 1270 880 1262 935 1258 935 1205 960 1200 985 1235 1000 1280 985 1295 970 1278 1000 1340 1025 1385 1055 1445 1100 1500 1100 1450 1108 1435 1102 1380 1128 1332 1250 1445 1380 1550 1402 1569"/>
            <path class="seam" d="M555 1210L555 1250 570 1285 570 1345 670 1347 650 1385 648 1450 658 1490 665 1568M650 1350L635 1415 600 1450 565 1492 580 1520 575 1568M670 1362L720 1370 722 1392 795 1400 830 1405 855 1440 885 1500 910 1550M795 1400L798 1300 845 1300 870 1280M845 1425L970 1378 1020 1370M855 1440L858 1500 875 1540M208 1492L250 1485 330 1440 370 1440 400 1465 430 1510M245 1418L252 1485M330 1440L335 1568M650 1568L745 1537 850 1555M1108 1500L1080 1500 1060 1568M1108 1500L1140 1480 1155 1530 1180 1568M1105 1500L1150 1568M530 1225L545 1200 575 1185M575 1230H555M620 1200H640M912 1247H932M660 1295V1310"/>
          </g>
          <!-- Southern Queens, Jamaica Bay and the Rockaways -->
          <g transform="translate(2380 860) scale(.54847 .57398)">
            <path class="land" d="M0 68L0 990 50 990 80 975 105 950 135 950 130 935 180 900 155 870 120 845 80 805 100 810 150 850 170 885 210 890 240 885 225 850 170 775 225 840 255 870 285 855 320 845 322 800 300 785 280 760 290 745 300 765 325 795 375 795 358 815 360 838 400 845 470 832 460 790 445 725 457 725 465 790 475 815 510 815 500 760 515 780 525 805 560 815 553 750 575 728 648 730 600 730 570 738 560 760 570 805 600 830 740 885 800 910 845 940 810 985 835 1000 855 970 880 957 915 970 935 1005 950 980 965 950 1040 920 1100 895 1105 860 1050 820 1115 885 1140 885 1158 900 1135 905 1140 825 1200 805 1260 788 1255 750 1238 725 1240 640 1256 600 1256 575 1250 440 1245 380 1228 308 1362 278 1385 275 1438 195 1428 105 1375 72"/>
            <path class="seam" d="M187 0L195 60 235 135 247 160 250 200 268 232M195 78L290 70 345 72 335 110 365 120 250 157M50 147L235 132M345 72L340 130 385 195 430 260 490 330 520 365 545 357 600 430 650 510 690 580 718 640 712 698M50 230L105 232 178 247M105 232L108 295 50 308M108 272L190 255 268 232 315 225 385 200M80 147L82 165 100 170 130 190 165 180 178 200 148 208 178 247M215 262L250 320 300 370M315 225L325 260 310 320 320 380 355 450M50 380L160 380 175 415M50 465L100 425 230 412 232 400 300 375M50 515L100 500 100 470 200 447 320 445 355 450M340 415L430 405 545 357M460 403L460 435 505 450 605 440 640 445 650 425 685 415 690 435 710 430 720 400 775 390 850 375 940 355 1040 335 1065 325 1045 290M50 575L120 560 180 520 240 500 350 480 355 460 375 470 460 435M90 570L100 580 240 525M240 500L255 580 285 600 295 635 325 655 325 705 290 745M50 615L150 595 200 600 300 640 490 690 530 710 620 718 690 700 800 703 880 725 980 765 1050 815 1100 855M285 600L360 598 435 578 460 585 470 570 525 555 540 540 655 518 685 525 750 470 800 440 865 428 915 460 870 515 880 535 850 540 765 560 740 545 720 570 690 580M375 470L400 520 440 590 490 690 540 815M712 692L935 682 1030 690 1165 692M805 685L810 650 880 610 920 590 870 545 850 540M915 460L905 415 950 400M910 600L985 640 1040 625 1085 560 1125 495 1095 490 1075 430 965 445 950 400 930 358M1010 635L1040 655 1032 690M1040 335L1065 385 1078 440M1095 490L1110 450 1140 443 1250 445M1100 540L1190 562 1250 575 1150 690 1105 720 1100 750M1085 560L1185 580 1190 562M985 775L1005 748 1090 785 1128 785 1128 760 1100 750M585 60L650 47 765 70 795 68 775 45 770 0M560 0L585 60 595 100 580 110 630 148 690 125 710 145 768 147M630 148L635 178 748 180 768 165 765 70M748 180L760 210 795 290 790 330 775 370 785 390M505 215L525 210 545 200 640 205 755 205 900 168 1035 130 1000 90 995 60 1020 55M465 0L455 80 470 110 495 115 475 155 475 172 505 178 510 210M495 130L560 117 590 135 630 148M545 200L548 245 488 255 545 310 547 348 605 346M545 357L700 355 795 335M622 205L620 265 655 280 690 290 692 315 665 330 670 355M800 0L850 70 900 168 938 245 885 262 900 295M795 290L885 262M885 305L950 290 1040 288 1100 250 1195 175 1235 135 1280 80 1325 58 1345 55M955 155L975 185 995 215 975 245 1040 288M1100 250L1215 275 1228 308M1235 130L1295 127 1362 250 1362 278M1020 30L1030 60 1080 70 1110 105 1120 145 1110 170 1065 180 1070 190 1130 188 1150 205M1090 20L1155 85 1145 105 1195 170M1040 30L1120 80M50 640L80 660 90 705 140 698 140 708 50 745M50 770L80 795 145 772 195 835 170 885M740 932L800 910"/>
            <path class="land" d="M160 1015L185 985 255 955 268 960 262 1005 225 1030 165 1035ZM375 920L385 890 400 882 412 893 385 920ZM312 935L320 920 355 917 355 930ZM312 950L325 965 370 960 390 942 375 972 315 975ZM320 1000L340 998 345 1006 325 1008ZM360 998L370 986 380 993ZM492 880L510 888 530 898 553 898 557 875 575 935 610 985 600 1000 612 1030 600 1045 625 1050 620 1080 600 1140 580 1178 485 1175 480 1168 555 1155 570 1120 560 1065 530 1048 487 1040 470 1035 480 1000 510 985 497 950 505 915ZM605 935L625 933 640 975 650 1030 630 1010 612 970ZM675 985L730 957 765 972 735 980 725 1010 705 1050 695 1050 685 1020ZM735 1045L745 1020 765 990 825 993 835 1030 862 1045 800 1075 780 1085 735 1065ZM700 1100L730 1085 760 1090 755 1110 705 1112ZM622 1115L655 1125 655 1145 640 1153 625 1135ZM280 1130L320 1130 365 1150 330 1170 290 1165ZM225 1215L255 1200 290 1215 285 1255 245 1265 225 1250ZM420 1185L450 1170 480 1185 497 1210 480 1215 450 1197ZM330 1075L375 1062 372 1080 345 1090ZM380 1100L410 1050 440 1065 465 1055 445 1095 420 1115 390 1110ZM472 1095L490 1080 512 1092 490 1105ZM525 1095L535 1076 540 1100ZM210 1072L222 1080 228 1110 215 1095ZM0 1048L75 1050 90 1068 60 1095 0 1100ZM0 1115L50 1115 135 1108 155 1185 178 1245 165 1275 125 1290 50 1300 0 1300ZM920 1035L950 1003 965 1045 915 1042ZM0 1375L50 1360 135 1360 200 1345 270 1310 370 1265 410 1270 500 1255 530 1240 590 1228 680 1185 700 1155 740 1148 825 1122 795 1155 795 1175 835 1125 870 1085 905 1080 910 1110 890 1140 860 1145 870 1162 895 1145 915 1155 935 1158 945 1110 940 1075 915 1060 945 1045 975 1055 1005 1075 1110 1062 1165 1120 1165 1182 1110 1188 1070 1205 985 1203 880 1213 620 1258 500 1290 280 1365 50 1432 0 1445Z"/>
            <path class="seam" d="M50 1385L135 1362M255 1325L280 1367M600 1228L618 1258M985 1203L990 1150 975 1145 960 1165M1000 1140L990 1160M255 1325L280 1310"/>
            <path class="speck" d="M485 990l25-8-5 12-22 22zM385 1100l30 4 2 10-25-2zM705 1103l40-8 10 10-45 6zM278 980h6M402 976l14 6M430 960l14 4M226 1130l4 30M243 1088l6 4M330 1075l14 8-4 5zM475 1205l18 2v8zM672 1188l32-8-5 16-18 2zM495 750l22 5-8 18zM282 750l16-4v14zM80 808l20 6 10 20zM1102 885l16 0-8 10zM310 35l10 0 4 15-8-3zM1140 1163h25v4zM795 1168l8 0 0 10h-8zM560 1142l14 0M615 1045l14 4-10 6zM780 1075l10 0-4 12z"/>
          </g>
          <path class="land" d="M2233 1690V1741L2262 1731 2284 1722 2348 1700"/>
        </svg>
      </div>
      <div class="bar-v d-flex flex-column" style="margin-left:2px">
        <button style="height:34px" aria-label="Scroll up"><svg width="16" height="12" viewBox="0 0 12 8"><use href="#plusArrow"/></svg></button>
        <div class="knob flex-grow-1"></div>
        <button style="height:38px" aria-label="Scroll down"><svg width="16" height="12" viewBox="0 0 12 8" style="transform:rotate(180deg)"><use href="#plusArrow"/></svg></button>
      </div>
    </div>
    <div class="bar-h d-flex align-items-center" style="height:31px;padding:2px 30px 0 0">
      <button class="view-btn picked" aria-label="Data View"><svg width="16" height="16" viewBox="0 0 16 16"><path d="M1 1h14v14H1z" fill="#9cbc4c" stroke="#333" stroke-width="2"/><path d="M8 14q0-4 6-5v5z" fill="#b8dcf4"/><path d="M4 3h5L4 8z" fill="#dcecac"/></svg></button>
      <button class="view-btn" aria-label="Layout View"><svg width="16" height="16" viewBox="0 0 16 16"><path d="M1.500 1h8L14 5v10H1.500z" fill="#fff" stroke="#333" stroke-width="2"/><path d="M9 1v5h5" fill="none" stroke="#333" stroke-width="2"/><path d="M4 11h4M4 7h3" stroke="#333" stroke-width="2"/></svg></button>
      <div class="rule" style="height:27px"></div>
      <button class="view-btn" aria-label="Refresh" style="margin-left:6px"><svg width="18" height="18" viewBox="0 0 18 18"><path d="M2 7q4-8 13-3M16 11q-4 8-13 3" fill="none" stroke="#0c4c90" stroke-width="2.500"/><path d="M11 7h6V1zM7 11H1v6z" fill="#0c4c90"/></svg></button>
      <button class="view-btn" aria-label="Pause drawing"><svg width="14" height="14"><path d="M3 0v14M11 0v14" stroke="#1c50a0" stroke-width="4"/></svg></button>
      <button class="view-btn" aria-label="Scroll left"><svg width="16" height="12" viewBox="0 0 12 8" style="transform:rotate(-90deg)"><use href="#plusArrow"/></svg></button>
      <div class="knob flex-grow-1 align-self-stretch"></div>
      <button style="width:38px" aria-label="Scroll right"><svg width="16" height="12" viewBox="0 0 12 8" style="transform:rotate(90deg)"><use href="#plusArrow"/></svg></button>
    </div>
  </section>

  <div class="dock flex-shrink-0">
    <button><svg class="ico"><use href="#catalog"/></svg><span>Catalog</span></button>
    <button><svg class="ico"><use href="#searchwin"/></svg><span>Search</span></button>
  </div>
</main>

<footer class="status d-flex justify-content-end">
  <div style="width:40px"></div>
  <div style="width:514px">-74.135&nbsp; 40.692 Decimal Degrees</div>
</footer>

<div class="dlg" role="dialog" aria-labelledby="dlgTitle">
  <div class="dlg-title d-flex align-items-center justify-content-between"><span id="dlgTitle">Data Frame Properties</span><button class="me-1" aria-label="Close dialog"><svg width="22" height="22"><path d="M1 1l20 20M21 1L1 21" stroke="#000" stroke-width="2"/></svg></button></div>
  <div style="height:19px"></div>
  <ul class="nav nav-fill tabs flex-nowrap" role="tablist">
    <li class="nav-item"><button class="nav-link w-100" role="tab">Feature Cache</button></li><li class="nav-item"><button class="nav-link w-100" role="tab">Annotation Groups</button></li><li class="nav-item"><button class="nav-link w-100" role="tab">Extent Indicators</button></li><li class="nav-item"><button class="nav-link w-100" role="tab">Frame</button></li><li class="nav-item"><button class="nav-link w-100" role="tab">Size and Position</button></li>
  </ul>
  <ul class="nav nav-fill tabs flex-nowrap" role="tablist">
    <li class="nav-item"><button class="nav-link w-100" role="tab">General</button></li><li class="nav-item"><button class="nav-link w-100" role="tab">Data Frame</button></li><li class="nav-item"><button class="nav-link w-100 active" role="tab" aria-selected="true">Coordinate System</button></li><li class="nav-item"><button class="nav-link w-100" role="tab">Illumination</button></li><li class="nav-item"><button class="nav-link w-100" role="tab">Grids</button></li>
  </ul>
  <div class="sheet">
    <div class="lookup d-flex align-items-center">
      <button class="tool" aria-label="Filter"><svg class="ico" viewBox="0 0 16 16"><path d="M.5 1.500L5.500 8v6l3.500 2V8l5-6.500z" fill="url(#gCan)" stroke="#7088a4" stroke-width=".6"/><ellipse cx="7.200" cy="1.600" rx="6.800" ry="1.400" fill="#587898"/><path d="M8.800 9.300h6.400v6H8.800z" fill="#fff"/><path d="M8 8.500h2v2H8zM11 8.500h2v2h-2zM14 8.500h2v2h-2zM8 11.300h2v2H8zM14 11.300h2v2h-2zM8 14h2v2H8zM11 14h2v2h-2zM14 14h2v2h-2z" fill="#1458b8"/></svg></button>
      <button class="drop" style="width:30px" aria-label="Filter options"></button>
      <div class="rule"></div>
      <div class="combo" style="width:399px;margin:0 8px 0 20px"><input type="text" aria-label="Search" placeholder="Type here to search"><button aria-label="Search history"><svg width="18" height="18" viewBox="0 0 18 18"><path d="M2 5l7 7 7-7" fill="none" stroke="#444" stroke-width="2"/></svg></button></div>
      <button class="tool wide" aria-label="Run search"><svg class="ico" viewBox="0 0 16 16"><circle cx="8" cy="8" r="7" fill="#c4e4fc" stroke="#6cb4e4"/><circle cx="7.500" cy="7" r="2.800" fill="#e8f6ff" stroke="#1464a8" stroke-width="1.300"/><path d="M9.500 9.500l3 3" stroke="#1464a8" stroke-width="1.800"/></svg></button>
      <button class="tool wide" aria-label="Clear search"><svg class="ico" viewBox="0 0 16 16"><circle cx="8" cy="8" r="7" fill="#d4d4d4" stroke="#989898"/><circle cx="8.500" cy="6.500" r="3" fill="#eee" stroke="#606060" stroke-width="1.200"/><path d="M10.500 9l3 4" stroke="#505050" stroke-width="1.600"/><path d="M1.500 9.500l5 5M6.500 9.500l-5 5" stroke="#222" stroke-width="1.600"/></svg></button>
      <div class="rule me-1"></div>
      <button class="tool wide" aria-label="New coordinate system"><svg class="ico" viewBox="0 0 16 16"><use href="#gridglobe"/><path d="M12 0l1 3 3 1-3 1.500-1 3-1-3L8 4l3-1z" fill="#fce860"/></svg></button>
      <button class="drop" style="width:28px" aria-label="New options"></button>
      <button class="tool" aria-label="Add to favorites"><svg class="ico" viewBox="0 0 16 16"><path d="M7 2l1.600 4.500h5L9.800 9.700l1.700 5.500L7 12l-4.500 3.200 1.700-5.500L.4 6.500h5z" fill="#fcc030" stroke="#c87010" stroke-width=".9"/><path d="M11.500 1v6.500M8.300 4.200h6.500" stroke="#000" stroke-width="2.200"/></svg></button>
    </div>
    <div class="picker d-flex flex-column justify-content-between">
      <div class="d-flex">
        <ul class="list-unstyled mb-0 flex-grow-1 d-flex flex-column" role="listbox" aria-label="Coordinate systems">
          <li role="option"><svg class="ico"><use href="#gridglobe"/></svg><span>NAD 1983 (2011) StatePlane New Jersey FIPS 2900 (US Feet)</span></li>
          <li role="option"><svg class="ico"><use href="#gridglobe"/></svg><span>NAD 1983 (2011) StatePlane New Mexico Central FIPS3002</span></li>
          <li role="option"><svg class="ico"><use href="#gridglobe"/></svg><span>NAD 1983 (2011) StatePlane New Mexico East FIPS 3001</span></li>
          <li role="option"><svg class="ico"><use href="#gridglobe"/></svg><span>NAD 1983 (2011) StatePlane New Mexico West FIPS 3003</span></li>
          <li role="option"><svg class="ico"><use href="#gridglobe"/></svg><span>NAD 1983 (2011) StatePlane New York Central FIPS 3102</span></li>
          <li role="option"><svg class="ico"><use href="#gridglobe"/></svg><span>NAD 1983 (2011) StatePlane New York East FIPS 3101 (US Feet)</span></li>
          <li role="option" class="on" aria-selected="true"><svg class="ico" style="filter:brightness(.75)"><use href="#gridglobe"/></svg><span>NAD 1983 (2011) StatePlane New York Long Isl FIPS 3104</span></li>
          <li role="option"><svg class="ico"><use href="#gridglobe"/></svg><span>NAD 1983 (2011) StatePlane New York West FIPS 3103 (US Feet)</span></li>
          <li role="option"><svg class="ico"><use href="#gridglobe"/></svg><span>NAD 1983 (2011) StatePlane North Carolina FIPS 3200 (US Feet)</span></li>
        </ul>
        <div class="bar-v bar-wide d-flex flex-column flex-shrink-0">
          <button style="height:34px" aria-label="Scroll list up"><svg width="16" height="12" viewBox="0 0 12 8"><use href="#plusArrow"/></svg></button>
          <div class="knob" style="height:34px;margin-top:106px"></div>
          <button class="mt-auto" style="height:34px" aria-label="Scroll list down"><svg width="16" height="12" viewBox="0 0 12 8" style="transform:rotate(180deg)"><use href="#plusArrow"/></svg></button>
        </div>
      </div>
      <div class="bar-h d-flex" style="height:31px">
        <button style="width:34px" aria-label="Scroll list left"><svg width="16" height="12" viewBox="0 0 12 8" style="transform:rotate(-90deg)"><use href="#plusArrow"/></svg></button>
        <div class="knob" style="width:612px"></div>
        <button class="ms-auto" style="width:34px;margin-right:32px" aria-label="Scroll list right"><svg width="16" height="12" viewBox="0 0 12 8" style="transform:rotate(90deg)"><use href="#plusArrow"/></svg></button>
      </div>
    </div>
    <label class="d-block" for="crs" style="margin-top:14px">Current coordinate system:</label>
    <div class="coords d-flex">
      <textarea id="crs" class="flex-grow-1" readonly>NAD_1983_2011_StatePlane_New_York_Long_Isl_FIPS_3104_Ft_US
WKID: 6539 Authority: EPSG

Projection: Lambert_Conformal_Conic
False_Easting: 984250.0
False_Northing: 0.0
Central_Meridian: -74.0
Standard_Parallel_1: 40.66666666666666
Standard_Parallel_2: 41.03333333333333
Latitude_Of_Origin: 40.16666666666666
Linear Unit: Foot_US (0.3048006096012192)</textarea>
      <div class="bar-v bar-wide d-flex flex-column flex-shrink-0">
        <button style="height:32px" aria-label="Scroll text up"><svg width="16" height="12" viewBox="0 0 12 8"><use href="#plusArrow"/></svg></button>
        <div class="knob" style="height:118px"></div>
        <button class="mt-auto" style="height:34px" aria-label="Scroll text down"><svg width="16" height="12" viewBox="0 0 12 8" style="transform:rotate(180deg)"><use href="#plusArrow"/></svg></button>
      </div>
    </div>
    <button class="push d-block" style="width:242px;margin-top:124px">Transformations...</button>
  </div>
  <div class="d-flex justify-content-end" style="gap:16px;padding:18px 13px 15px">
    <button class="push main">OK</button><button class="push">Cancel</button><button class="push">Apply</button>
  </div>
</div>
</body>
</html>
